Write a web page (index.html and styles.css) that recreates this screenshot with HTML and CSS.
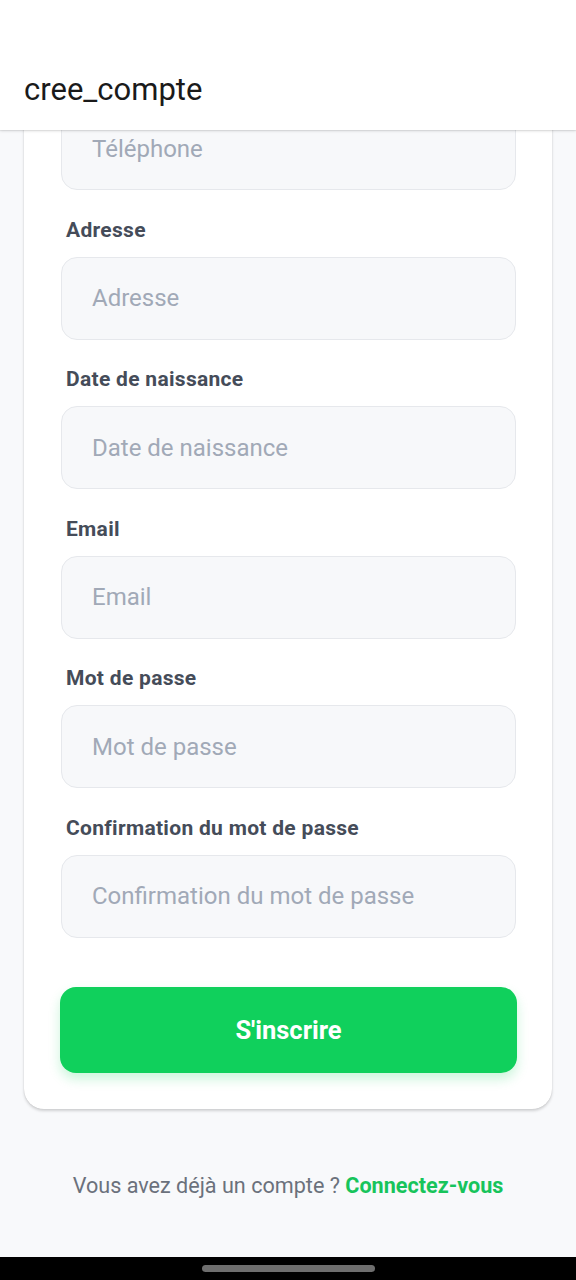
FILE: index.html
```html
<!DOCTYPE html>
<html lang="fr">
<head>
<meta charset="utf-8">
<title>cree_compte</title>
<link rel="stylesheet" href="styles.css">
</head>
<body>
<div class="screen">
  <header class="appbar">
    <h1 class="appbar-title">cree_compte</h1>
  </header>
  <main class="scroll">
    <div class="scroll-inner">
      <form class="card">
        <div class="field field-first">
          <input class="input" type="tel" placeholder="Téléphone">
        </div>
        <div class="field">
          <label class="label">Adresse</label>
          <input class="input" type="text" placeholder="Adresse">
        </div>
        <div class="field">
          <label class="label">Date de naissance</label>
          <input class="input" type="text" placeholder="Date de naissance">
        </div>
        <div class="field">
          <label class="label">Email</label>
          <input class="input" type="email" placeholder="Email">
        </div>
        <div class="field">
          <label class="label">Mot de passe</label>
          <input class="input" type="password" placeholder="Mot de passe">
        </div>
        <div class="field">
          <label class="label">Confirmation du mot de passe</label>
          <input class="input" type="password" placeholder="Confirmation du mot de passe">
        </div>
        <button class="btn" type="button">S'inscrire</button>
      </form>
      <p class="footer">Vous avez déjà un compte ? <a class="link" href="#">Connectez-vous</a></p>
    </div>
  </main>
  <div class="navbar"><span class="handle"></span></div>
</div>
</body>
</html>
```

FILE: styles.css
```css
* { box-sizing: border-box; }
html, body { margin: 0; padding: 0; }
body {
  font-family: Roboto, "Noto Sans", "Liberation Sans", sans-serif;
  background: #f8f9fb;
}
.screen {
  width: 576px;
  height: 1280px;
  display: flex;
  flex-direction: column;
  overflow: hidden;
}
.appbar {
  height: 130px;
  flex: none;
  background: #ffffff;
  display: flex;
  align-items: flex-end;
  padding: 0 24px 22px;
  position: relative;
  z-index: 2;
  box-shadow: 0 1px 3px rgba(0,0,0,0.12), 0 1px 1px rgba(0,0,0,0.06);
}
.appbar-title {
  margin: 0;
  font-size: 31px;
  font-weight: 400;
  color: #1a1a1a;
  line-height: 36px;
}
.scroll {
  flex: 1;
  overflow: hidden;
}
.scroll-inner {
  margin-top: -23px;
  padding: 0 24px;
}
.card {
  background: #ffffff;
  border-radius: 20px;
  padding: 0 36px 36px 37px;
  box-shadow: 0 2px 3px rgba(0,0,0,0.16), 0 0 1px rgba(0,0,0,0.18);
  display: flex;
  flex-direction: column;
  gap: 27.6px;
}
.field {
  display: flex;
  flex-direction: column;
  gap: 15px;
}
.label {
  font-size: 21px;
  font-weight: 700;
  line-height: 24px;
  letter-spacing: 0.3px;
  color: #454c59;
  padding-left: 5px;
}
.input {
  height: 83px;
  width: 100%;
  border: 1.5px solid #e6e8ec;
  border-radius: 16px;
  background: #f7f8fa;
  padding: 0 30px;
  font-family: inherit;
  font-size: 24px;
  color: #1f2937;
  outline: none;
}
.input::placeholder { color: #a1a9b7; }
.btn {
  margin-top: 21.4px;
  height: 86px;
  width: calc(100% + 2px);
  margin-left: -1px;
  border: none;
  border-radius: 16px;
  background: #10d05c;
  color: #ffffff;
  font-family: inherit;
  font-size: 25.5px;
  font-weight: 700;
  box-shadow: 0 6px 12px rgba(16,208,92,0.22);
}
.footer {
  margin: 65px 0 0;
  text-align: center;
  font-size: 21.6px;
  line-height: 24px;
  color: #6b717c;
}
.link {
  color: #17c45b;
  font-weight: 700;
  text-decoration: none;
}
.navbar {
  height: 23px;
  flex: none;
  background: #000000;
  display: flex;
  justify-content: center;
  align-items: center;
}
.handle {
  width: 173px;
  height: 7px;
  border-radius: 4px;
  background: #6e6e6e;
}
```
